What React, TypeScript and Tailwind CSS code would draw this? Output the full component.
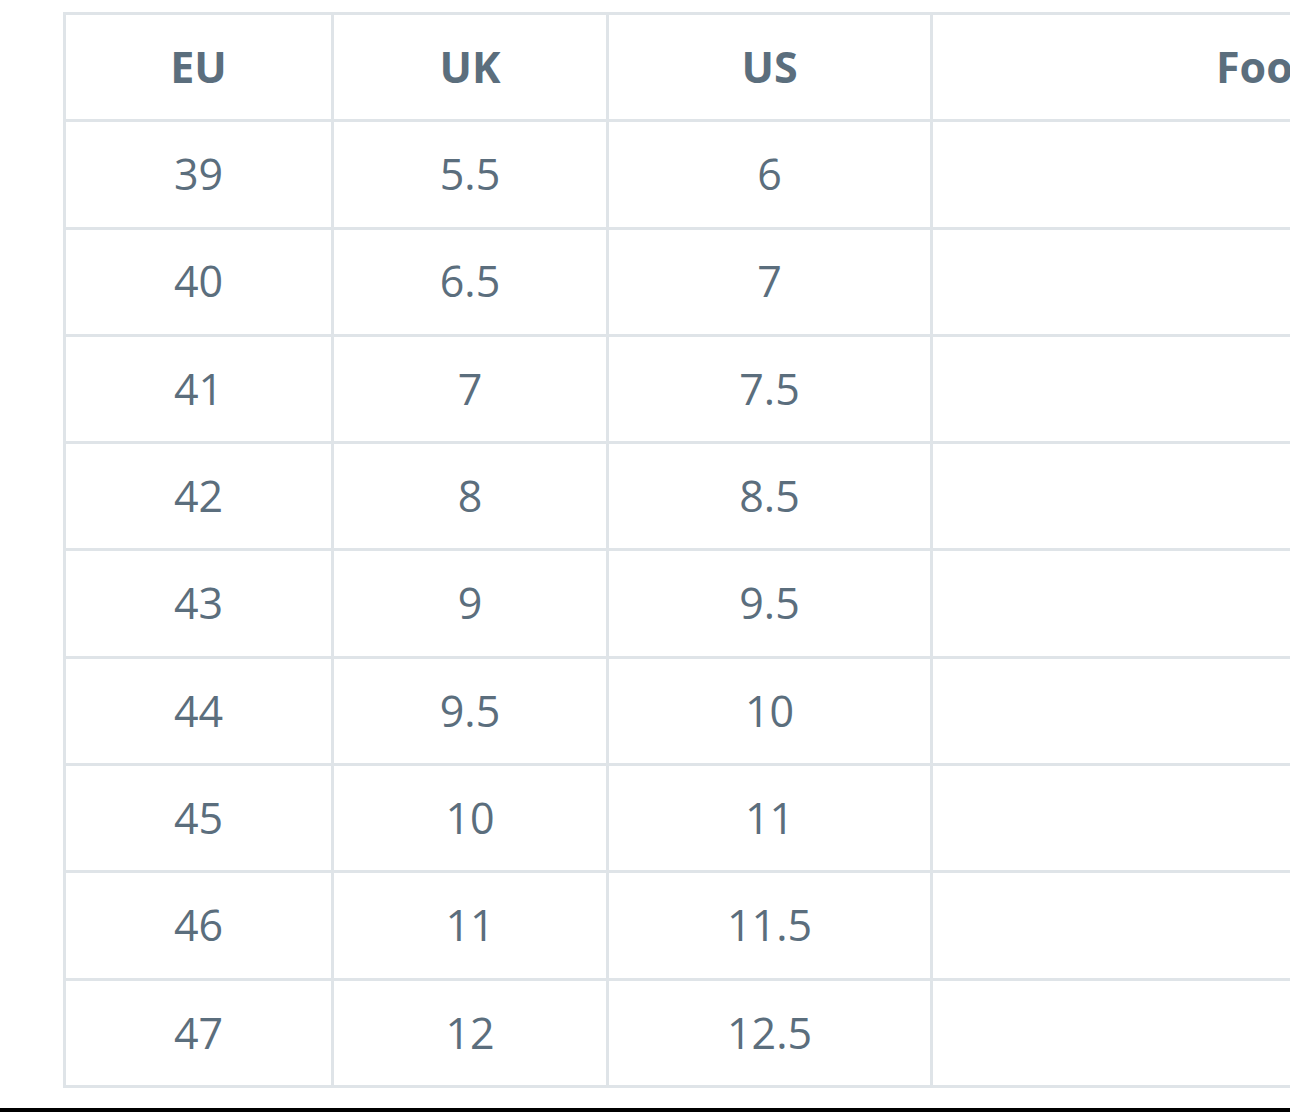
import React from "react";

const rows = [
  ["39", "5.5", "6"],
  ["40", "6.5", "7"],
  ["41", "7", "7.5"],
  ["42", "8", "8.5"],
  ["43", "9", "9.5"],
  ["44", "9.5", "10"],
  ["45", "10", "11"],
  ["46", "11", "11.5"],
  ["47", "12", "12.5"],
];

export default function App() {
  const cell = "bg-white h-[104.3px] flex items-center justify-center";
  return (
    <div className="w-[1290px] h-[1112px] bg-white overflow-hidden flex flex-col" style={{ fontFamily: '"Open Sans", "Noto Sans", sans-serif' }}>
      <div className="pt-[12px] pl-[63px] overflow-hidden">
        <div className="grid grid-cols-[265px_272px_321px_760px] gap-[3px] p-[3px] bg-[#dfe4e8] w-max text-[#5b6e7d] text-[43px]">
          <div className={cell + " font-bold"}>EU</div>
          <div className={cell + " font-bold"}>UK</div>
          <div className={cell + " font-bold"}>US</div>
          <div className={cell + " font-bold justify-start pl-[283px]"}>Foot length</div>
          {rows.map((r, i) => (
            <React.Fragment key={i}>
              <div className={cell}>{r[0]}</div>
              <div className={cell}>{r[1]}</div>
              <div className={cell}>{r[2]}</div>
              <div className={cell}></div>
            </React.Fragment>
          ))}
        </div>
      </div>
      <div className="flex-1" />
      <div className="h-[4px] bg-black" />
    </div>
  );
}
